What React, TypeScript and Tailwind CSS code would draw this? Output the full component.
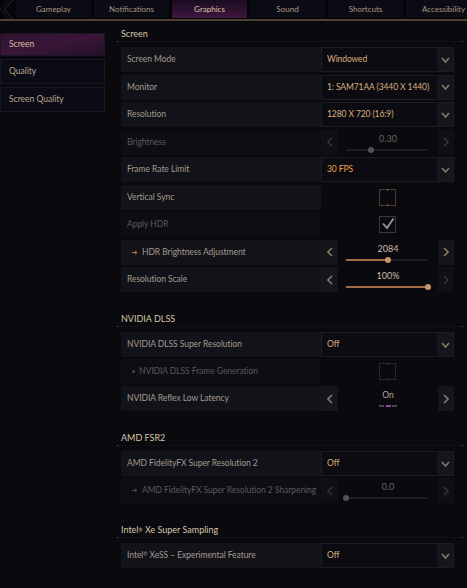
import React from "react";

const font = { fontFamily: "Lato, 'Noto Sans', sans-serif" };

function ChevDown({ dim = false }: { dim?: boolean }) {
  return (
    <svg width="9" height="6" viewBox="0 0 9 6">
      <polyline points="1,1 4.5,5 8,1" fill="none" stroke={dim ? "#3c342e" : "#8a7664"} strokeWidth="1.6" />
    </svg>
  );
}
function ChevSide({ dir, dim = false }: { dir: "l" | "r"; dim?: boolean }) {
  return (
    <svg width="6" height="10" viewBox="0 0 6 10">
      <polyline
        points={dir === "l" ? "5,1 1,5 5,9" : "1,1 5,5 1,9"}
        fill="none"
        stroke={dim ? "#3a322c" : "#8a7664"}
        strokeWidth="1.6"
      />
    </svg>
  );
}

function Dropdown({ value, strong = false }: { value: string; strong?: boolean }) {
  return (
    <div className="flex h-full border border-[#1c1c25] bg-[#0b0b11]">
      <div
        className={`flex-1 flex items-center pl-[5px] text-[8.5px] whitespace-nowrap overflow-hidden tracking-[-0.1px] ${
          strong ? "text-[#e9a64a]" : "text-[#d9b07c]"
        }`}
      >
        {value}
      </div>
      <div className="w-[16px] shrink-0 bg-[#15151c] flex items-center justify-center">
        <ChevDown />
      </div>
    </div>
  );
}

function Slider({ value, pct, disabled = false, rightDim = false }: { value: string; pct: number; disabled?: boolean; rightDim?: boolean }) {
  return (
    <div className="flex h-full">
      <div className={`w-[17px] flex items-center justify-center ${disabled ? "bg-[#0f0f15]" : "bg-[#15151c]"}`}>
        <ChevSide dir="l" dim={disabled} />
      </div>
      <div className="flex-1 flex flex-col items-center pt-[3px]">
        <div className={`text-[9px] leading-[11px] ${disabled ? "text-[#6a6660]" : "text-[#cdbda6]"}`}>{value}</div>
        <div className="mt-[5px] ml-[-2px] w-[82px] h-[2px] bg-[#1c1c22] relative">
          {!disabled && <div className="h-full bg-[#a06c44]" style={{ width: `${pct}%` }} />}
          <div
            className={`absolute top-[-2px] w-[6px] h-[6px] rounded-full ${disabled ? "bg-[#555250]" : "bg-[#c8946c]"}`}
            style={{ left: `calc(${pct}% - 3px)` }}
          />
        </div>
      </div>
      <div className={`w-[16px] flex items-center justify-center ${disabled || rightDim ? "bg-[#0f0f15]" : "bg-[#15151c]"}`}>
        <ChevSide dir="r" dim={disabled || rightDim} />
      </div>
    </div>
  );
}

function Check({ checked = false, dim = false }: { checked?: boolean; dim?: boolean }) {
  const border = checked ? "border-[#3c3a38]" : dim ? "border-[#2a2826]" : "border-[#4c3c30]";
  return (
    <div className="h-full flex items-center justify-center">
      <div className={`relative w-[17px] h-[17px] border ${border} bg-[#0a0a0e]`}>
        {!checked && (
          <>
            <div className={`absolute left-[7px] top-[-1px] w-[1px] h-[2px] ${dim ? "bg-[#3a3632]" : "bg-[#7a6450]"}`} />
            <div className={`absolute left-[7px] bottom-[-1px] w-[1px] h-[2px] ${dim ? "bg-[#3a3632]" : "bg-[#7a6450]"}`} />
          </>
        )}
        {checked && (
          <svg className="absolute left-[1px] top-[0px]" width="14" height="14" viewBox="0 0 14 14">
            <polyline points="2,6.5 6,11 12.5,1.5" fill="none" stroke="#9a9896" strokeWidth="1.8" />
          </svg>
        )}
      </div>
    </div>
  );
}

function Toggle() {
  return (
    <div className="flex h-full">
      <div className="w-[17px] bg-[#15151c] flex items-center justify-center">
        <ChevSide dir="l" />
      </div>
      <div className="flex-1 flex flex-col items-center pt-[4px]">
        <div className="text-[8.5px] leading-[11px] text-[#b8aa98]">On</div>
        <div className="mt-[4px] flex gap-[1.5px]">
          <div className="w-[5px] h-[1.5px] bg-[#4a4650]" />
          <div className="w-[5px] h-[1.5px] bg-[#8c4ca0]" />
          <div className="w-[5px] h-[1.5px] bg-[#4a4650]" />
        </div>
      </div>
      <div className="w-[16px] bg-[#15151c] flex items-center justify-center">
        <ChevSide dir="r" />
      </div>
    </div>
  );
}

function SubMark({ kind, dim }: { kind: "arrow" | "tri"; dim?: boolean }) {
  if (kind === "tri")
    return (
      <svg className="mr-[3px] shrink-0" width="4" height="5" viewBox="0 0 4 5">
        <polygon points="0.5,0.5 3.5,2.5 0.5,4.5" fill="#55504a" />
      </svg>
    );
  return (
    <svg className="mr-[4px] shrink-0" width="6" height="5" viewBox="0 0 6 5">
      <line x1="0" y1="2.5" x2="4.5" y2="2.5" stroke={dim ? "#5a4a3c" : "#c07c40"} strokeWidth="1" />
      <polyline points="3,0.8 5,2.5 3,4.2" fill="none" stroke={dim ? "#5a4a3c" : "#c07c40"} strokeWidth="1" />
    </svg>
  );
}

type RowProps = {
  label: React.ReactNode;
  disabled?: boolean;
  sub?: "arrow" | "tri";
  children: React.ReactNode;
};

function Row({ label, disabled = false, sub, children }: RowProps) {
  return (
    <div className="flex h-[25px]">
      <div
        className={`w-[200px] shrink-0 flex items-center text-[8.5px] tracking-[-0.05px] whitespace-nowrap ${sub ? "pl-[11px]" : "pl-[6px]"} ${
          disabled ? "bg-[#0d0d13] text-[#5c5a58]" : "bg-[#121219] text-[#a39b90]"
        }`}
      >
        {sub && <SubMark kind={sub} dim={disabled} />}
        {label}
      </div>
      <div className="flex-1 min-w-0">{children}</div>
    </div>
  );
}

function Section({ title, first = false, gap, children }: { title: React.ReactNode; first?: boolean; gap: string; children: React.ReactNode }) {
  return (
    <div className={first ? "" : "mt-[20px]"}>
      <div className="h-[14px] flex items-center pl-[8px] text-[9px] text-[#d8c8aa] whitespace-nowrap">{title}</div>
      <div className="h-[6px] flex items-start px-[4px] pr-[4px]">
        <div className="w-[1px] h-[1px] bg-[#6a5a4c]" />
        <div className="flex-1 h-[1px] bg-[#101016]" />
        <div className="w-[1px] h-[1px] bg-[#6a5a4c]" />
      </div>
      <div className={`flex flex-col ${gap} pl-[8px] pr-[13px]`}>{children}</div>
    </div>
  );
}

const tabs = ["Gameplay", "Notifications", "Graphics", "Sound", "Shortcuts", "Accessibility"];

export default function App() {
  return (
    <div className="w-[467px] h-[588px] bg-[#09090e] overflow-hidden" style={font}>
      {/* top tabs */}
      <div className="relative h-[21px] bg-[#050508]">
        <div className="flex h-[19px] overflow-hidden">
          <div className="w-[16px] shrink-0 flex items-center">
            <svg width="16" height="19" viewBox="0 0 16 19">
              <polyline points="13,0 4,9.5 13,19" fill="none" stroke="#2e2836" strokeWidth="1" />
              <polyline points="9,0 0,9.5 9,19" fill="none" stroke="#1e1a26" strokeWidth="1" />
            </svg>
          </div>
          <div className="flex gap-[3px]">
            {tabs.map((t) => (
              <div
                key={t}
                className={`w-[75px] shrink-0 h-[18px] flex items-center justify-center text-[8px] whitespace-nowrap ${
                  t === "Graphics"
                    ? "bg-gradient-to-b from-[#1a0b20] to-[#40163f] text-[#dcc3a4]"
                    : "bg-[#0b0b16] text-[#a8977f]"
                }`}
              >
                {t}
              </div>
            ))}
          </div>
        </div>
        <div className="h-[2px] bg-[#4e3f33]" />
      </div>

      <div className="flex">
        {/* sidebar */}
        <div className="w-[105px] shrink-0 pt-[12px] flex flex-col gap-[3px]">
          <div className="h-[23px] flex items-center pl-[8px] text-[8.5px] text-[#d6bea2] border border-[#1e1424] bg-gradient-to-br from-[#2e1230] via-[#3a1638] to-[#22102a]">
            Screen
          </div>
          <div className="h-[25px] flex items-center pl-[8px] text-[8.5px] text-[#b9a78e] border border-[#181822] bg-[#0b0b15]">
            Quality
          </div>
          <div className="h-[25px] flex items-center pl-[8px] text-[8.5px] text-[#b9a78e] border border-[#181822] bg-[#0b0b15]">
            Screen Quality
          </div>
        </div>

        {/* main */}
        <div className="flex-1 ml-[8px] pt-[6px]">
          <Section title="Screen" first gap="gap-[2.5px]">
            <Row label="Screen Mode">
              <Dropdown value="Windowed" />
            </Row>
            <Row label="Monitor">
              <Dropdown value="1: SAM71AA (3440 X 1440)" />
            </Row>
            <Row label="Resolution">
              <Dropdown value="1280 X 720 (16:9)" />
            </Row>
            <Row label="Brightness" disabled>
              <Slider value="0.30" pct={30} disabled />
            </Row>
            <Row label="Frame Rate Limit">
              <Dropdown value="30 FPS" strong />
            </Row>
            <Row label="Vertical Sync">
              <Check />
            </Row>
            <Row label="Apply HDR" disabled>
              <Check checked />
            </Row>
            <Row label="HDR Brightness Adjustment" sub="arrow">
              <Slider value="2084" pct={51} />
            </Row>
            <Row label="Resolution Scale">
              <Slider value="100%" pct={100} rightDim />
            </Row>
          </Section>

          <Section title="NVIDIA DLSS" gap="gap-[2px]">
            <Row label="NVIDIA DLSS Super Resolution">
              <Dropdown value="Off" />
            </Row>
            <Row label="NVIDIA DLSS Frame Generation" disabled sub="tri">
              <Check dim />
            </Row>
            <Row label="NVIDIA Reflex Low Latency">
              <Toggle />
            </Row>
          </Section>

          <Section title="AMD FSR2" gap="gap-[2px]">
            <Row label="AMD FidelityFX Super Resolution 2">
              <Dropdown value="Off" />
            </Row>
            <Row label="AMD FidelityFX Super Resolution 2 Sharpening" disabled sub="arrow">
              <Slider value="0.0" pct={0} disabled />
            </Row>
          </Section>

          <Section
            title={
              <span>
                Intel<sup className="text-[5px] relative top-[-1px]">®</sup> Xe Super Sampling
              </span>
            }
            gap="gap-[2px]"
          >
            <Row
              label={
                <span>
                  Intel<sup className="text-[5px]">®</sup> XeSS – Experimental Feature
                </span>
              }
            >
              <Dropdown value="Off" />
            </Row>
          </Section>
        </div>
      </div>
    </div>
  );
}
